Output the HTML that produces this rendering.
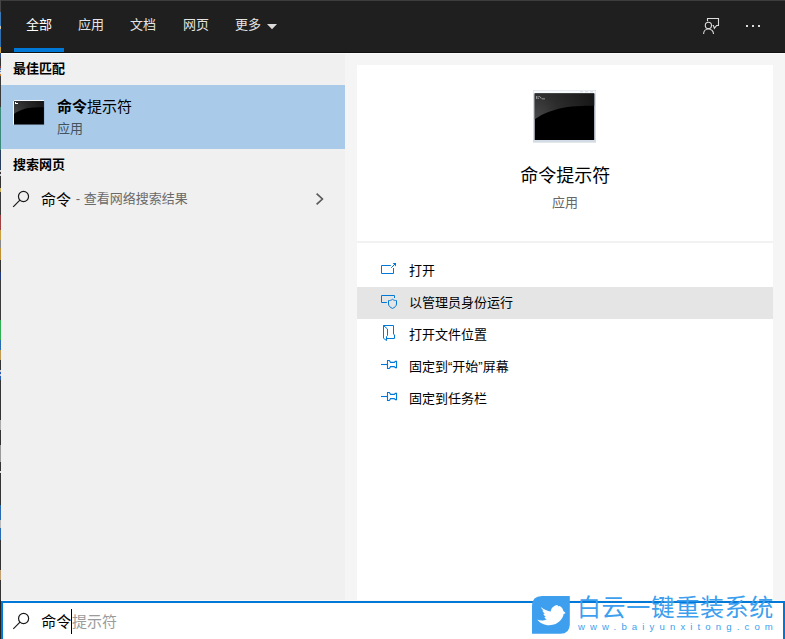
<!DOCTYPE html>
<html lang="zh-CN">
<head>
<meta charset="utf-8">
<title>搜索 - 命令提示符</title>
<style>
html,body{margin:0;padding:0;}
html{width:785px;height:639px;overflow:hidden;}
body{width:785px;height:639px;position:relative;overflow:hidden;background:#f5f5f5;font-family:"Liberation Sans","Noto Sans CJK SC",sans-serif;}
.abs{position:absolute;}
.lbl{position:absolute;white-space:nowrap;overflow:visible;}
.lbl span{position:absolute;left:0;top:0;font-family:"Liberation Sans","Noto Sans CJK SC",sans-serif;white-space:nowrap;}
#edge{left:0;top:0;width:1px;height:639px;background:linear-gradient(#454545 0px,#454545 12px,#3a78b8 12px,#3a78b8 26px,#cfc6b0 26px,#cfc6b0 29px,#2f6fb0 29px,#2f6fb0 47px,#c8a040 47px,#c8a040 53px,#2a4a80 53px,#2a4a80 58px,#333 58px,#333 66px,#8a3a3a 66px,#8a3a3a 68px,#5a7fc0 68px,#5a7fc0 70px,#ddd 70px,#ddd 71px,#5a7fc0 71px,#5a7fc0 72px,#ddd 72px,#ddd 74px,#c87a30 74px,#c87a30 76px,#3a3a3a 76px,#3a3a3a 107px,#3a8a7a 107px,#3a8a7a 150px,#2a3f5f 150px,#2a3f5f 170px,#ccc 170px,#ccc 172px,#333 172px,#333 174px,#ccc 174px,#ccc 176px,#333 176px,#333 188px,#c8b060 188px,#c8b060 192px,#3a3a3a 192px,#3a3a3a 215px,#a04040 215px,#a04040 230px,#c8a040 230px,#c8a040 240px,#888 240px,#888 248px,#c09030 248px,#c09030 260px,#333 260px,#333 272px,#223a7a 272px,#223a7a 280px,#3a3a3a 280px,#3a3a3a 320px,#2fb050 320px,#2fb050 340px,#2a6ab0 340px,#2a6ab0 350px,#c09a50 350px,#c09a50 360px,#333 360px,#333 370px,#ccd 370px,#ccd 372px,#2a5ab0 372px,#2a5ab0 374px,#ccd 374px,#ccd 376px,#2a5ab0 376px,#2a5ab0 380px,#333 380px,#333 420px,#aaa 420px,#aaa 430px,#333 430px,#333 445px,#999 445px,#999 462px,#333 462px,#333 471px,#ddd 471px,#ddd 473px,#333 473px,#333 505px,#2a6ab0 505px,#2a6ab0 520px,#bbb 520px,#bbb 528px,#2a6ab0 528px,#2a6ab0 540px,#333 540px,#333 570px,#c0a070 570px,#c0a070 580px,#333 580px,#333 600px,#222 600px,#222 639px);}
#topbar{left:0;top:0;width:785px;height:52px;background:#1f1f1f;}
#topline{left:0;top:0;width:785px;height:1px;background:#3d3d3d;}
#topshadow{left:1px;top:52px;width:784px;height:1px;background:#121212;}
#topwhite{left:1px;top:53px;width:784px;height:1px;background:#fcfcfc;}
#tabline{left:14px;top:48px;width:50px;height:4px;background:#0078d7;}
#left{left:1px;top:54px;width:344px;height:546px;background:#f0f0f0;}
#sel{left:1px;top:85px;width:344px;height:64px;background:#a9cbe9;}
#card{left:357px;top:65px;width:416px;height:536px;background:#fff;}
#divider{left:357px;top:241px;width:416px;height:2px;background:#f2f2f2;}
#hot{left:357px;top:287px;width:416px;height:32px;background:#e5e5e5;}
#botline{left:1px;top:600px;width:784px;height:1px;background:#fbf8f6;}
#search{left:1px;top:601px;width:780px;height:36px;border:2px solid #0078d7;border-bottom:0;background:#fff;}
#url span{font-size:9.6px;line-height:14px;letter-spacing:5.12px;}
#caret{left:71px;top:609px;width:1px;height:25px;background:#000;}
</style>
</head>
<body>
<div id="chrome">
<div class="abs" id="topbar"></div><div class="abs" id="topline"></div>
<div class="abs" id="topshadow"></div><div class="abs" id="topwhite"></div>
<div class="abs" id="left"></div><div class="abs" id="sel"></div>
<div class="abs" id="card"></div><div class="abs" id="divider"></div><div class="abs" id="hot"></div>
<div class="abs" id="botline"></div><div class="abs" id="search"></div><div class="abs" id="caret"></div>
<div class="abs" id="tabline"></div>
<div class="abs" id="edge"></div>
</div>
<nav id="tabs">
<div class="lbl tab" style="left:26px;top:16px;width:27px;height:18px;font-size:13px;line-height:18px;"><span style="color:#ffffff">全部</span></div>
<div class="lbl tab" style="left:78px;top:16px;width:27px;height:18px;font-size:13px;line-height:18px;"><span style="color:#e4e4e4">应用</span></div>
<div class="lbl tab" style="left:130px;top:16px;width:27px;height:18px;font-size:13px;line-height:18px;"><span style="color:#e4e4e4">文档</span></div>
<div class="lbl tab" style="left:183px;top:16px;width:27px;height:18px;font-size:13px;line-height:18px;"><span style="color:#e4e4e4">网页</span></div>
<div class="lbl tab" style="left:235px;top:16px;width:27px;height:18px;font-size:13px;line-height:18px;"><span style="color:#e4e4e4">更多</span></div>
<svg class="abs" style="left:266px;top:23px" width="12" height="8" viewBox="0 0 12 8"><path fill="#dadada" d="M1 1H11L6 6.2Z"/></svg>
<svg class="abs" style="left:700px;top:14px" width="24" height="24" viewBox="700 14 24 24" ><g fill="none" stroke="#dcdcdc" stroke-width="1.1"><path d="M707.5 21.2V18.5H718.5V25.5H716.6L714.4 28.3L713.4 25.5H712.6"/><circle cx="708.4" cy="25.4" r="3.1"/><path d="M703.6 33.9C703.6 31.2 705.7 29 708.5 29C711.3 29 713.5 31.2 713.5 33.9"/></g></svg>
<svg class="abs" style="left:744px;top:22px" width="20" height="8" viewBox="744 22 20 8" ><g fill="#dcdcdc"><rect x="746" y="25" width="2" height="2"/><rect x="752" y="25" width="2" height="2"/><rect x="758" y="25" width="2" height="2"/></g></svg>
</nav>
<section id="results">
<div class="lbl " style="left:13px;top:60px;width:53px;height:18px;font-size:13px;line-height:18px;"><span style="color:#000;font-weight:bold">最佳匹配</span></div>
<div class="lbl " style="left:57px;top:96px;width:76px;height:21px;font-size:15px;line-height:21px;"><span style="color:#000"><b style="font-weight:bold">命令</b>提示符</span></div>
<div class="lbl " style="left:57px;top:120px;width:27px;height:18px;font-size:13px;line-height:18px;"><span style="color:#45535f">应用</span></div>
<div class="lbl " style="left:13px;top:156px;width:53px;height:18px;font-size:13px;line-height:18px;"><span style="color:#000;font-weight:bold">搜索网页</span></div>
<div class="lbl " style="left:41px;top:189px;width:31px;height:21px;font-size:15px;line-height:21px;"><span style="color:#000">命令</span></div>
<div class="lbl " style="left:75.8px;top:190px;width:6px;height:18px;font-size:13px;line-height:18px;"><span style="color:#6a6a6a">-</span></div>
<div class="lbl " style="left:83.7px;top:190px;width:105px;height:18px;font-size:13px;line-height:18px;"><span style="color:#6a6a6a">查看网络搜索结果</span></div>
<svg class="abs" style="left:10px;top:188px" width="24" height="24" viewBox="10 188 24 24" ><g fill="none" stroke="#1a1a1a" stroke-width="1.2"><circle cx="23.5" cy="196.5" r="5.05"/><path d="M19.9 200.1L13.2 206.8"/></g></svg>
<svg class="abs" style="left:312px;top:190px" width="16" height="18" viewBox="312 190 16 18" ><path fill="none" stroke="#5a5a5a" stroke-width="1.7" d="M316.6 193.6L322.4 199L316.6 204.4"/></svg>
<svg class="abs" style="left:12px;top:98px" width="34" height="30" viewBox="12 98 34 30" ><defs><radialGradient id="g1" gradientUnits="userSpaceOnUse" cx="13" cy="112" r="32"><stop offset="0" stop-color="#444"/><stop offset=".5" stop-color="#282828"/><stop offset="1" stop-color="#151515"/></radialGradient></defs><rect x="13" y="100" width="31" height="25" fill="#000"/><path fill="url(#g1)" d="M14 101H44V107.3C36 107.3 29 107.6 25 108.8C20 110.3 16.5 112 14 114Z"/><path fill="none" stroke="#f4f7fb" stroke-width="1" d="M13.5 125V100.5H44"/><path fill="none" stroke="#8fa9c4" stroke-opacity=".6" stroke-width="1" d="M13.5 124.6H44.4V101"/><path fill="#fff" d="M15 102h1v2h-1zM16 103h2v1h-2z"/></svg>
</section>
<aside id="preview">
<div class="lbl " style="left:520.3px;top:164px;width:91px;height:25px;font-size:18px;line-height:25px;"><span style="color:#000">命令提示符</span></div>
<div class="lbl " style="left:552px;top:194px;width:27px;height:18px;font-size:13px;line-height:18px;"><span style="color:#666">应用</span></div>
<div class="lbl " style="left:409px;top:262px;width:27px;height:18px;font-size:13px;line-height:18px;"><span style="color:#000">打开</span></div>
<div class="lbl " style="left:409px;top:294px;width:105px;height:18px;font-size:13px;line-height:18px;"><span style="color:#000">以管理员身份运行</span></div>
<div class="lbl " style="left:409px;top:326px;width:79px;height:18px;font-size:13px;line-height:18px;"><span style="color:#000">打开文件位置</span></div>
<div class="lbl " style="left:409px;top:358px;width:102px;height:18px;font-size:13px;line-height:18px;"><span style="color:#000">固定到“开始”屏幕</span></div>
<div class="lbl " style="left:409px;top:390px;width:79px;height:18px;font-size:13px;line-height:18px;"><span style="color:#000">固定到任务栏</span></div>
<svg class="abs" style="left:378px;top:260px" width="22" height="18" viewBox="378 260 22 18" ><g fill="none" stroke="#0078d7" stroke-width="1"><path d="M390.8 265.5H381.5V273.5H393.5V268"/><path d="M391.2 267.8L395.6 263.4"/></g><path fill="#0078d7" d="M392.6 263H396V266.4Z"/></svg>
<svg class="abs" style="left:378px;top:292px" width="22" height="20" viewBox="378 292 22 20" ><g fill="none" stroke="#0078d7" stroke-width="1"><path d="M386.9 302.5H381.5V295.5H394.5V298"/><path d="M392.5 299.3C391.2 300.3 389.8 300.6 388.5 300.6V304C388.5 306 390.5 307.6 392.5 308.4C394.5 307.6 396.5 306 396.5 304V300.6C395.2 300.6 393.8 300.3 392.5 299.3Z"/></g></svg>
<svg class="abs" style="left:378px;top:322px" width="22" height="22" viewBox="378 322 22 22" ><g fill="none" stroke="#0078d7" stroke-width="1" stroke-linejoin="round"><path d="M383.5 325.5H393.5V334L394.5 335V338.5H386.5"/><path d="M383.5 325.5V338.3L386.5 340.5V336.5L387.5 335.5V329Z"/></g></svg>
<svg class="abs" style="left:378px;top:356px" width="22" height="18" viewBox="378 356 22 18" ><g fill="none" stroke="#0078d7" stroke-width="1.1"><path d="M381 364.5H387.5"/><path d="M387.5 360.5H389.3L390.6 362.4H394.3L395.3 361.4H396.5V367.6H395.3L394.3 366.6H390.6L389.3 368.5H387.5Z"/></g></svg>
<svg class="abs" style="left:378px;top:388px" width="22" height="18" viewBox="378 388 22 18" ><g fill="none" stroke="#0078d7" stroke-width="1.1"><path d="M381 396.5H387.5"/><path d="M387.5 392.5H389.3L390.6 394.4H394.3L395.3 393.4H396.5V399.6H395.3L394.3 398.6H390.6L389.3 400.5H387.5Z"/></g></svg>
<svg class="abs" style="left:530px;top:88px" width="70" height="58" viewBox="530 88 70 58" ><defs><radialGradient id="g2" gradientUnits="userSpaceOnUse" cx="532" cy="118" r="62"><stop offset="0" stop-color="#4a4a4a"/><stop offset=".45" stop-color="#2c2c2c"/><stop offset="1" stop-color="#181818"/></radialGradient></defs><rect x="533" y="90" width="63" height="52" fill="#d3dbe6"/><rect x="533.5" y="90.5" width="62" height="3" fill="#f7f9fb"/><rect x="534.7" y="93.4" width="59.5" height="46.6" fill="#000"/><path fill="url(#g2)" d="M534.7 93.4H594.2V105.8C580 105.6 566 106.5 556 109.5C546 112.5 539 116 534.7 119.5Z"/><path fill="#b8b8b8" d="M536.3 96h1v3h-1zM538 96.4h.8v.8h-.8zM538 98h.8v.8h-.8zM539.5 96l2.5 2.6h-1L538.8 96zM542 98.4h3v.8h-3z"/><path fill="#d3dae2" d="M580 91.3h3v1h-3zM585 91.3h3v1h-3zM590 91.3h3v1h-3z"/><rect x="533" y="142" width="63" height="1" fill="#e4e7ea"/></svg>
</aside>
<footer id="searchbox">
<svg class="abs" style="left:10px;top:610px" width="24" height="24" viewBox="10 610 24 24" ><g fill="none" stroke="#1a1a1a" stroke-width="1.2"><circle cx="23.6" cy="618.5" r="5.05"/><path d="M20 622.1L13.3 628.8"/></g></svg>
<div class="lbl " style="left:41.3px;top:611px;width:31px;height:21px;font-size:15px;line-height:21px;"><span style="color:#000">命令</span></div>
<div class="lbl " style="left:72px;top:611px;width:46px;height:21px;font-size:15px;line-height:21px;"><span style="color:#9b9b9b">提示符</span></div>
</footer>
<div id="watermark">
<svg class="abs" style="left:530px;top:594px" width="42" height="45" viewBox="530 594 42 45" ><path fill="#3d9fee" d="M542 596H569.3Q569.8 596 569.8 596.5V624.3Q569.8 633.8 560.3 633.8H532.5Q532 633.8 532 633.3V606Q532 596 542 596Z"/><path fill="#fff" d="M565.6 613.1L563.6 614.3C563 618.2 559 624.9 549.5 625.3C544 625.4 539.5 622.6 537.1 619.5C540 621 544 621 546.7 619.3C545.6 618.9 544.8 618.2 544.3 617.4L545.7 616.7C544.6 615.9 543.8 615 543.3 613.9L544.8 613.6C543.6 612.8 542.8 611.8 542.3 610.6L543.7 610.5C542.3 609.5 541.4 608.3 540.8 606.9C544 609.3 547.5 611 550.8 611.6C551 608 553.6 605.6 557.3 605L558.4 606.4C558.9 606 559.5 606 560 606.2C561.6 606.8 563 608.8 563.4 610.9C564 611.5 565 612.3 565.6 613.1Z"/></svg>
<div class="lbl" style="left:577px;top:594px;width:197px;height:28px;font-size:24px;line-height:28px"><span style="color:#3d9fee;letter-spacing:0.6px">白云一键重装系统</span></div>
<div class="lbl" id="url" style="left:578px;top:620px;width:197px;height:14px"><span style="color:#3d9fee">www.baiyunxitong.com</span></div>
</div>
</body>
</html>
